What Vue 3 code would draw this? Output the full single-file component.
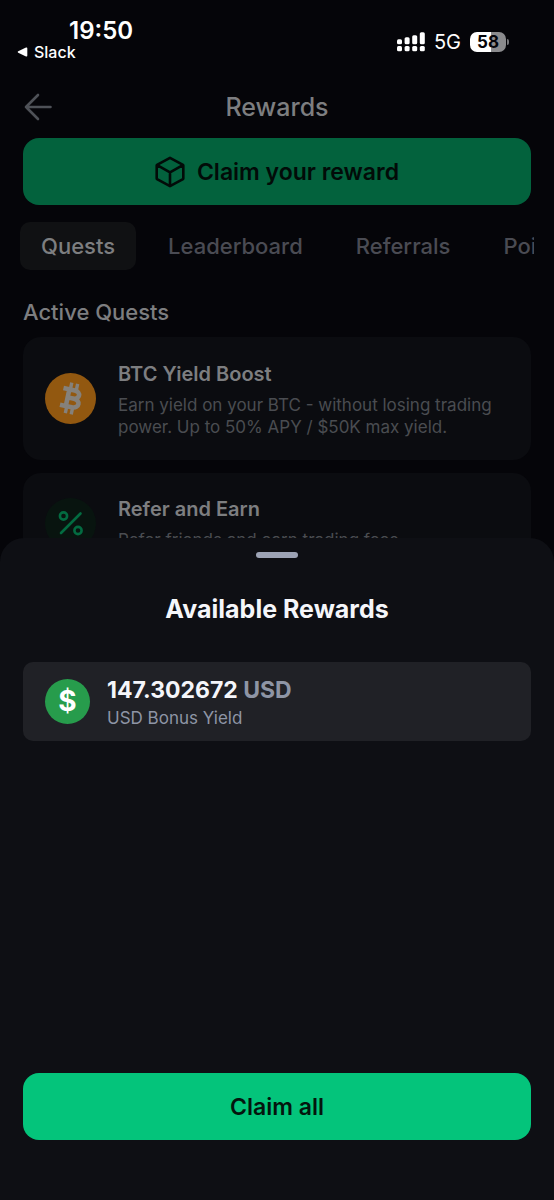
<script setup>
import { ref } from 'vue'

const tabs = ['Quests', 'Leaderboard', 'Referrals', 'Points']
const activeTab = ref('Quests')
const signal = [5, 7, 9, 12]
</script>

<template>
  <div class="screen">
    <div class="status">
      <div class="status-left">
        <span class="clock">19:50</span>
        <a class="back-app" href="#">
          <svg width="11" height="10" viewBox="0 0 11 10" aria-hidden="true"><path d="M1.2 4.3 9 .6Q10.300 0 10.300 1.400V8.600Q10.300 10 9 9.400L1.200 5.700Q0 5 1.200 4.300Z" fill="#fff" /></svg>
          Slack
        </a>
      </div>
      <div class="status-right">
        <svg width="28" height="20" viewBox="0 0 28 20" fill="#fff" aria-hidden="true">
          <g v-for="(h, i) in signal" :key="i">
            <rect :x="i * 7.600" :y="12.300 - h" width="5" :height="h" rx="1.500" />
            <rect :x="i * 7.600" y="14" width="5" height="5.200" rx="1.500" />
          </g>
        </svg>
        <span class="network">5G</span>
        <span class="battery"><span class="level">58</span></span>
      </div>
    </div>

    <header class="header">
      <button class="icon-button" aria-label="Back">
        <svg width="28" height="28" viewBox="0 0 28 28" fill="none" stroke="#4e5157" stroke-width="2.600" stroke-linecap="round" stroke-linejoin="round"><path d="M14 2 2 14l12 12M2 14h24.500" /></svg>
      </button>
      <h1>Rewards</h1>
    </header>

    <main class="content">
      <button class="cta dimmed">
        <svg width="30" height="32" viewBox="0 0 30 32" fill="none" stroke="currentColor" stroke-width="2.600" stroke-linecap="round" stroke-linejoin="round"><path d="M15 1.800 28 8.800Q28.300 9 28.300 9.500V22.500Q28.300 23 28 23.200L15 30.200 2 23.200Q1.700 23 1.700 22.500V9.500Q1.700 9 2 8.800ZM2.200 9.200 15 16.300 27.800 9.200M15 16.300V30" /></svg>
        Claim your reward
      </button>

      <nav class="tabs">
        <button v-for="tab in tabs" :key="tab" class="tab" :class="{ active: tab === activeTab }" @click="activeTab = tab">{{ tab }}</button>
      </nav>

      <h2>Active Quests</h2>
      <article class="quest">
        <svg class="quest-icon" viewBox="0 0 51 51" fill="none" aria-hidden="true">
          <circle cx="25.500" cy="25.500" r="25.500" fill="#925810" />
          <g transform="translate(26.500 25.500) rotate(12)" stroke="#85817b">
            <path d="M-10 -8.500H1.500C8.500 -8.500 8.500 -.3 1.500 -.3H-4M1.500 -.3C10 -.3 10 8.500 2 8.500H-10M-4 -8.500V8.500" stroke-width="4.600" />
            <path d="M-3 -15.500V-9M3 -15.500V-9M-3 9V15.500M3 9V15.500" stroke-width="3.400" />
          </g>
        </svg>
        <div>
          <h3>BTC Yield Boost</h3>
          <p>Earn yield on your BTC - without losing trading power. Up to 50% APY / $50K max yield.</p>
        </div>
      </article>
      <article class="quest">
        <svg class="quest-icon" viewBox="0 0 51 51" fill="none" aria-hidden="true">
          <circle cx="25.500" cy="25.500" r="25.500" fill="#08140f" />
          <g stroke="#036b41" stroke-width="2.600" stroke-linecap="round"><circle cx="18.500" cy="18" r="3.600" /><circle cx="33" cy="32.500" r="3.600" /><path d="M35.500 15.500 16 35" /></g>
        </svg>
        <div>
          <h3>Refer and Earn</h3>
          <p>Refer friends and earn trading fees.</p>
        </div>
      </article>
    </main>

    <section class="sheet" role="dialog" aria-labelledby="sheet-title">
      <div class="handle"></div>
      <h2 id="sheet-title">Available Rewards</h2>
      <div class="reward">
        <span class="coin">$</span>
        <div>
          <div class="amount">147.302672 <span>USD</span></div>
          <div class="caption">USD Bonus Yield</div>
        </div>
      </div>
      <button class="cta claim">Claim all</button>
    </section>
  </div>
</template>

<style>
body {
  background: #050509;
}
</style>

<style scoped>
.screen {
  box-sizing: border-box;
  height: 100vh;
  overflow: hidden;
  background: #050509;
  font-family: Inter, sans-serif;
  color: #7d7e80;
}
h1,
h2,
h3,
p {
  margin: 0;
  font-weight: 400;
}
button {
  border: 0;
  padding: 0;
  font: inherit;
  background: none;
  cursor: pointer;
}
.status {
  box-sizing: border-box;
  display: flex;
  justify-content: space-between;
  padding: 17px 48px 0 17px;
  height: 68px;
  color: #fff;
}
.status-left {
  display: flex;
  flex-direction: column;
}
.clock {
  padding-left: 52px;
  font-size: 24px;
  line-height: 28px;
  font-weight: 600;
}
.back-app {
  display: flex;
  align-items: center;
  gap: 6px;
  font-size: 16px;
  line-height: 14px;
  font-weight: 500;
  color: #fff;
  text-decoration: none;
}
.status-right {
  display: flex;
  align-items: center;
  gap: 9px;
  height: 49px;
}
.network {
  font-size: 20px;
}
.battery {
  position: relative;
  width: 36px;
  height: 20px;
  border-radius: 7px;
  background: linear-gradient(90deg, #fff 58%, #8b8b8d 58%);
  color: #050509;
  font-size: 17px;
  line-height: 20px;
  font-weight: 700;
  text-align: center;
}
.battery::after {
  content: '';
  position: absolute;
  right: -3px;
  top: 7px;
  width: 2px;
  height: 6px;
  border-radius: 0 2px 2px 0;
  background: #77777a;
}
.header {
  display: grid;
  grid-template-columns: 28px 1fr 28px;
  align-items: center;
  padding: 0 24px;
  height: 54px;
  margin-top: 12px;
}
.icon-button {
  display: flex;
}
.header h1 {
  font-size: 25px;
  font-weight: 500;
  text-align: center;
}
.content {
  padding: 0 23px;
}
.header + .content {
  margin-top: 4px;
}
.cta {
  display: flex;
  align-items: center;
  justify-content: center;
  gap: 12px;
  width: 100%;
  min-height: 67px;
  border-radius: 16px;
  background: #04c47b;
  color: #04150e;
  font-size: 23px;
  font-weight: 600;
}
.dimmed {
  background: #03623d;
  color: #020b08;
}
.tabs {
  display: flex;
  gap: 11px;
  margin: 17px -3px 0;
  overflow: hidden;
}
.tab {
  flex: none;
  height: 48px;
  padding: 0 21px;
  border-radius: 10px;
  font-size: 22px;
  font-weight: 500;
  color: #4a4b53;
}
.tab.active {
  background: #101113;
  color: #7d7e80;
}
.content h2 {
  margin: 28px 0 11px;
  font-size: 22px;
  font-weight: 500;
  line-height: 28px;
}
.quest {
  display: flex;
  align-items: center;
  gap: 22px;
  min-height: 123px;
  box-sizing: border-box;
  padding: 22px;
  border-radius: 18px;
  background: #0b0c10;
}
.quest + .quest {
  margin-top: 13px;
  align-items: flex-start;
}
.quest + .quest .quest-icon {
  margin-top: 3px;
}
.quest-icon {
  flex: none;
  width: 51px;
  height: 51px;
}
.quest h3 {
  font-size: 20px;
  line-height: 28px;
  font-weight: 600;
}
.quest p {
  margin-top: 6px;
  font-size: 17px;
  line-height: 22px;
  color: #4a4c51;
}
.sheet {
  position: fixed;
  inset: 538px 0 0;
  box-sizing: border-box;
  display: flex;
  flex-direction: column;
  padding: 14px 23px 60px;
  border-radius: 24px 24px 0 0;
  background: #0e0f14;
  color: #f5f6fa;
}
.handle {
  align-self: center;
  width: 42px;
  height: 6px;
  border-radius: 3px;
  background: #9da3b5;
}
.sheet h2 {
  margin: 35px 0 37px;
  font-size: 25px;
  line-height: 32px;
  font-weight: 700;
  text-align: center;
}
.reward {
  display: flex;
  align-items: center;
  gap: 17px;
  box-sizing: border-box;
  min-height: 79px;
  padding: 3px 22px 0;
  border-radius: 10px;
  background: #202126;
}
.coin {
  margin-bottom: 3px;
  width: 45px;
  height: 45px;
  border-radius: 50%;
  background: #279c4c;
  color: #fff;
  font-size: 28px;
  line-height: 45px;
  font-weight: 700;
  text-align: center;
}
.amount {
  font-size: 23px;
  line-height: 30px;
  font-weight: 700;
}
.amount span {
  color: #8e95a5;
}
.caption {
  font-size: 17px;
  line-height: 26px;
  color: #8e95a5;
}
.claim {
  margin-top: auto;
}
</style>
